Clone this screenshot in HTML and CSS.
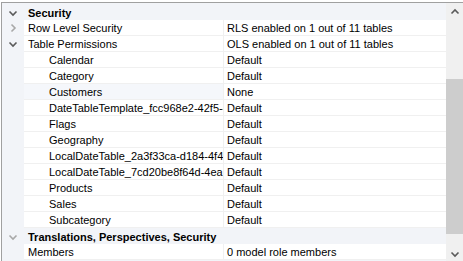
FILE: index.html
```html
<!DOCTYPE html>
<html lang="en">

<head>
    <meta charset="utf-8" />
    <title>Role Properties</title>
    <link rel="stylesheet" href="styles.css">
</head>

<body>
    <div class="frame">
        <div class="rows">
            <!-- Security -->
            <div class="row category">
                <div class="gutter"><svg class="chev" viewBox="0 0 10 10"><path d="M1.5 3.5 L5 7 L8.5 3.5" class="dark" /></svg></div>
                <div class="catName">Security</div>
            </div>
            <div class="row">
                <div class="gutter"><svg class="chev" viewBox="0 0 10 10"><path d="M3.5 1.5 L7 5 L3.5 8.5" class="light" /></svg></div>
                <div class="name">Row Level Security</div>
                <div class="value">RLS enabled on 1 out of 11 tables</div>
            </div>
            <div class="row">
                <div class="gutter"><svg class="chev" viewBox="0 0 10 10"><path d="M1.5 3.5 L5 7 L8.5 3.5" class="dark" /></svg></div>
                <div class="name">Table Permissions</div>
                <div class="value">OLS enabled on 1 out of 11 tables</div>
            </div>
            <div class="row">
                <div class="gutter"></div>
                <div class="name child">Calendar</div>
                <div class="value">Default</div>
            </div>
            <div class="row">
                <div class="gutter"></div>
                <div class="name child">Category</div>
                <div class="value">Default</div>
            </div>
            <div class="row">
                <div class="gutter"></div>
                <div class="name child picked">Customers</div>
                <div class="value">None</div>
            </div>
            <div class="row">
                <div class="gutter"></div>
                <div class="name child">DateTableTemplate_fcc968e2-42f5-4c1a-9b2e</div>
                <div class="value">Default</div>
            </div>
            <div class="row">
                <div class="gutter"></div>
                <div class="name child">Flags</div>
                <div class="value">Default</div>
            </div>
            <div class="row">
                <div class="gutter"></div>
                <div class="name child">Geography</div>
                <div class="value">Default</div>
            </div>
            <div class="row">
                <div class="gutter"></div>
                <div class="name child">LocalDateTable_2a3f33ca-d184-4f41-b8a2</div>
                <div class="value">Default</div>
            </div>
            <div class="row">
                <div class="gutter"></div>
                <div class="name child">LocalDateTable_7cd20be8f64d-4ea1-9c3b</div>
                <div class="value">Default</div>
            </div>
            <div class="row">
                <div class="gutter"></div>
                <div class="name child">Products</div>
                <div class="value">Default</div>
            </div>
            <div class="row">
                <div class="gutter"></div>
                <div class="name child">Sales</div>
                <div class="value">Default</div>
            </div>
            <div class="row">
                <div class="gutter"></div>
                <div class="name child">Subcategory</div>
                <div class="value">Default</div>
            </div>
            <!-- Translations -->
            <div class="row category">
                <div class="gutter"><svg class="chev" viewBox="0 0 10 10"><path d="M1.5 3.5 L5 7 L8.5 3.5" class="light" /></svg></div>
                <div class="catName">Translations, Perspectives, Security</div>
            </div>
            <div class="row">
                <div class="gutter"></div>
                <div class="name">Members</div>
                <div class="value">0 model role members</div>
            </div>
        </div>
        <div class="scrollbar">
            <div class="arrow"><svg viewBox="0 0 10 10"><path d="M1.5 6.5 L5 3 L8.5 6.5" class="dark" /></svg></div>
            <div class="track">
                <div class="thumb"></div>
            </div>
            <div class="arrow"><svg viewBox="0 0 10 10"><path d="M1.5 3.5 L5 7 L8.5 3.5" class="dark" /></svg></div>
        </div>
    </div>
</body>

</html>
```

FILE: styles.css
```css
body {
    margin: 0;
    background: #ffffff;
    font-family: "Liberation Sans", Arial, sans-serif;
    font-size: 11px;
    color: #000000;
}

.frame {
    display: flex;
    margin: 2px 0 0 1px;
    height: 259px;
    border-top: 1px solid #a0a0a0;
    border-left: 1px solid #a0a0a0;
    overflow: hidden;
}

.rows {
    flex: 1;
    display: flex;
    flex-direction: column;
    padding-top: 1px;
    background: #f2f4f8;
}

.row {
    display: grid;
    grid-template-columns: 22px 200px 1fr;
    height: 16px;
    flex: none;
}

.gutter {
    display: flex;
    align-items: center;
    justify-content: center;
}

.chev {
    width: 10px;
    height: 10px;
}

svg path {
    fill: none;
    stroke-width: 1.6;
}

.dark {
    stroke: #5a5a5a;
}

.light {
    stroke: #a8a8a8;
}

.name,
.value {
    box-sizing: border-box;
    height: 16px;
    padding-top: 1px;
    background: #ffffff;
    border-bottom: 1px solid #f0f0f0;
    line-height: 15px;
    white-space: nowrap;
    overflow: hidden;
}

.name {
    padding-left: 4px;
    border-right: 1px solid #f0f0f0;
}

.name.child {
    padding-left: 25px;
}

.name.picked {
    background: #f5f7fb;
}

.value {
    padding-left: 3px;
}

.category .catName {
    grid-column: 2 / 4;
    padding-left: 4px;
    padding-top: 1px;
    font-weight: bold;
    line-height: 16px;
}

.scrollbar {
    width: 17px;
    display: flex;
    flex-direction: column;
    background: #f0f0f0;
}

.arrow {
    height: 17px;
    display: flex;
    align-items: center;
    justify-content: center;
}

.arrow svg {
    width: 10px;
    height: 10px;
}

.track {
    flex: 1;
}

.thumb {
    margin-top: 59px;
    height: 155px;
    background: #cdcdcd;
}
```
